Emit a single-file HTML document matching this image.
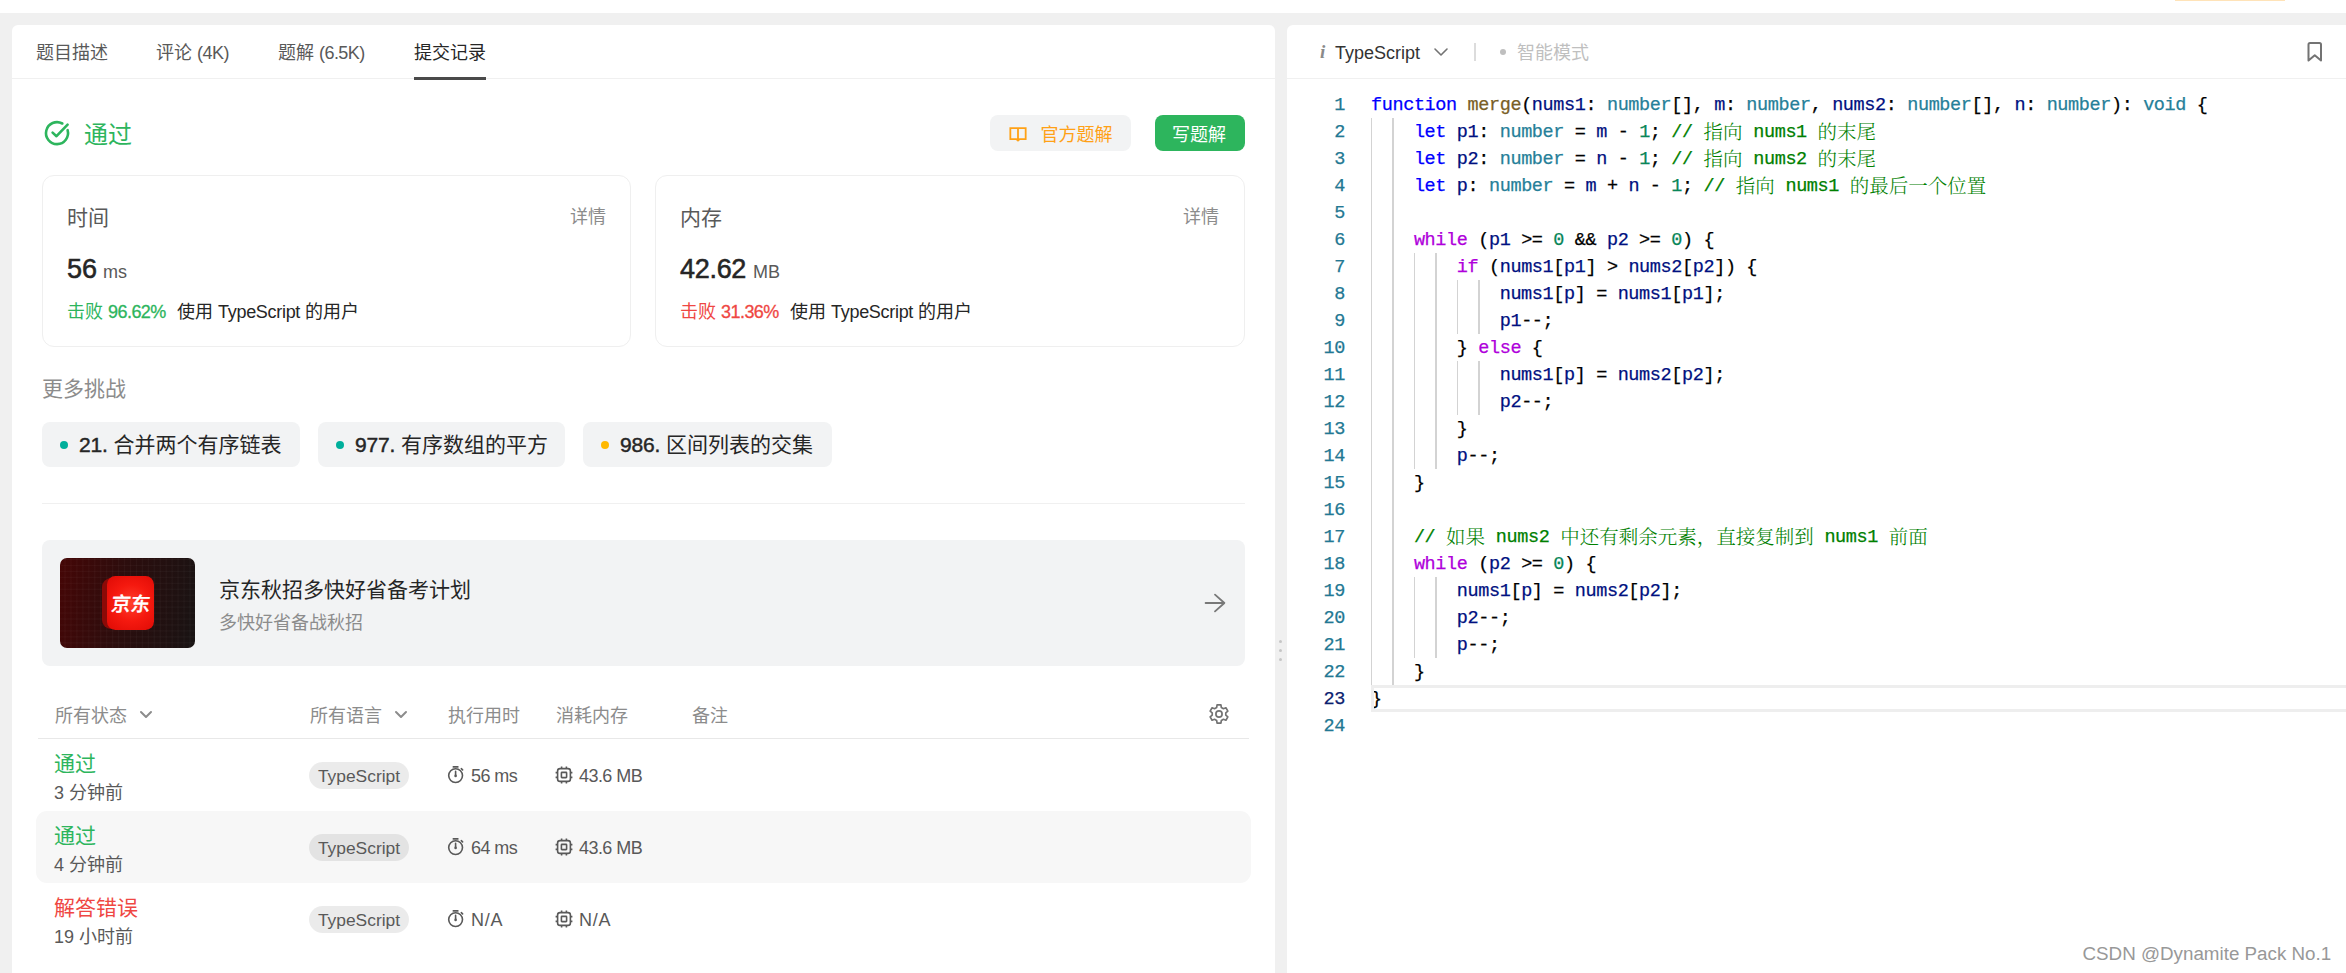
<!DOCTYPE html>
<html lang="zh-CN">
<head>
<meta charset="utf-8">
<title>提交记录</title>
<style>
*{box-sizing:border-box;margin:0;padding:0}
html,body{width:2346px;height:973px;overflow:hidden}
body{position:relative;background:#f0f0f0;font-family:"Liberation Sans","Noto Sans CJK SC",sans-serif;color:#262626}
.a{position:absolute;white-space:nowrap}
.t18{font-size:18px;line-height:30px;height:28px}
.t21{font-size:21px;line-height:34px;height:32px}
.g1{color:#262626}.g2{color:#595959}.g3{color:#8c8c8c}.g4{color:#bfbfbf}
.green{color:#2db55d}.red{color:#ef4743}.orange{color:#ffa116}
svg{position:absolute;overflow:visible}
.card{border:1px solid #efefef;border-radius:12px;background:#fff}
.chip{background:#f2f3f4;border-radius:8px;height:45px;top:422px}
.pill{background:rgba(0,0,0,.08);border-radius:14px;height:27px;width:100px;left:309px;font-size:17.4px;line-height:29px;text-align:center;color:#595959}
/* code */
.code{font-family:"Liberation Mono","Noto Serif CJK SC",monospace;font-size:18.5px;letter-spacing:-.38px;line-height:29px;height:27px;left:1371px;white-space:pre;color:#000;-webkit-text-stroke:.25px}
.ln{font-family:"Liberation Mono",monospace;font-size:18.5px;letter-spacing:-.38px;line-height:29px;-webkit-text-stroke:.25px;height:27px;left:1299px;width:46px;text-align:right;color:#237893}
.k{color:#0000ff}.c{color:#af00db}.ty{color:#267f99}.f{color:#795e26}.v{color:#001080}.n{color:#098658}.cm{color:#008000}
.z{font-size:19.5px;font-weight:300;letter-spacing:0;line-height:0;font-family:"Noto Serif CJK SC",serif;-webkit-text-stroke:0;position:relative;top:2px}
.l{letter-spacing:-.3px}.d{letter-spacing:-.55px}.sb{-webkit-text-stroke:.3px}
.gd{position:absolute;width:1.5px;background:#d9d9d9;margin-left:-.15px}
</style>
</head>
<body>
<!-- top strip -->
<div class="a" style="left:0;top:0;width:2346px;height:13px;background:#fff"></div>
<div class="a" style="left:2175px;top:0;width:110px;height:1px;background:#ffe3b8"></div>

<!-- LEFT PANEL -->
<div class="a" id="left" style="left:12px;top:25px;width:1263px;height:960px;background:#fff;border-radius:6px"></div>
<div class="a" style="left:12px;top:78px;width:1263px;height:1px;background:#f0f0f0"></div>

<!-- RIGHT PANEL -->
<div class="a" id="right" style="left:1287px;top:25px;width:1071px;height:960px;background:#fff;border-radius:6px"></div>
<div class="a" style="left:1287px;top:78px;width:1059px;height:1px;background:#f0f0f0"></div>

<!-- drag handle -->
<div class="a" style="left:1279px;top:640px;width:3px;height:3px;border-radius:2px;background:#c6c6c6"></div>
<div class="a" style="left:1279px;top:649px;width:3px;height:3px;border-radius:2px;background:#c6c6c6"></div>
<div class="a" style="left:1279px;top:658px;width:3px;height:3px;border-radius:2px;background:#c6c6c6"></div>
<!-- tabs -->
<div class="a t18 g2" style="left:36px;top:38px">题目描述</div>
<div class="a t18 g2" style="left:156px;top:38px">评论 <span class="d">(4K)</span></div>
<div class="a t18 g2" style="left:278px;top:38px">题解 <span class="d">(6.5K)</span></div>
<div class="a t18 g1" style="left:414px;top:38px">提交记录</div>
<div class="a" style="left:414px;top:77px;width:72px;height:3px;background:#4a4a4a"></div>

<!-- result heading -->
<svg style="left:43px;top:119px" width="28" height="28" viewBox="0 0 28 28" fill="none" stroke="#2db55d" stroke-width="2.6" stroke-linecap="round" stroke-linejoin="round"><path d="M24.6 11.2A11 11 0 1 1 19.3 4.5"/><path d="M9.6 13.6l3.9 3.6L24.6 5.6"/></svg>
<div class="a green" style="left:84px;top:117px;font-size:24px;line-height:36px">通过</div>

<!-- buttons -->
<div class="a" style="left:990px;top:115px;width:141px;height:36px;background:#f2f3f4;border-radius:8px"></div>
<svg style="left:1009px;top:125.5px" width="18" height="16.1" viewBox="0 0 19 17" fill="none" stroke="#ffa116" stroke-width="1.9"><path d="M9.5 2.2H1.4v11.6h6.3l1.8 1.6 1.8-1.6h6.3V2.2H9.5zM9.5 2.2v12.4"/></svg>
<div class="a t18 orange" style="left:1040.5px;top:119.5px">官方题解</div>
<div class="a" style="left:1155px;top:115px;width:90px;height:36px;background:#2db55d;border-radius:8px"></div>
<div class="a t18" style="left:1172px;top:119.5px;color:#fff">写题解</div>

<!-- cards -->
<div class="a card" style="left:42px;top:175px;width:589px;height:172px"></div>
<div class="a card" style="left:655px;top:175px;width:590px;height:172px"></div>
<div class="a t21 g2" style="left:67px;top:201px">时间</div>
<div class="a t18 g3" style="left:570px;top:201.7px">详情</div>
<div class="a g1" style="left:67px;top:248px;font-size:27px;line-height:42px;-webkit-text-stroke:.55px">56</div>
<div class="a t18 g2" style="left:103px;top:257px">ms</div>
<div class="a t18 green" style="left:67px;top:297px">击败 <span class="d sb">96.62%</span></div>
<div class="a t18 g1" style="left:177px;top:297px">使用 <span class="l">TypeScript</span> 的用户</div>

<div class="a t21 g2" style="left:680px;top:201px">内存</div>
<div class="a t18 g3" style="left:1183px;top:201.7px">详情</div>
<div class="a g1" style="left:680px;top:248px;font-size:27px;line-height:42px;-webkit-text-stroke:.55px;letter-spacing:-.3px">42.62</div>
<div class="a t18 g2" style="left:753px;top:257px">MB</div>
<div class="a t18 red" style="left:680px;top:297px">击败 <span class="d sb">31.36%</span></div>
<div class="a t18 g1" style="left:790px;top:297px">使用 <span class="l">TypeScript</span> 的用户</div>

<!-- more challenges -->
<div class="a t21 g3" style="left:42px;top:372px">更多挑战</div>
<div class="a chip" style="left:42px;width:258px"></div>
<div class="a chip" style="left:318px;width:247px"></div>
<div class="a chip" style="left:583px;width:249px"></div>
<div class="a" style="left:60px;top:441px;width:8px;height:8px;border-radius:4px;background:#00af9b"></div>
<div class="a" style="left:336px;top:441px;width:8px;height:8px;border-radius:4px;background:#00af9b"></div>
<div class="a" style="left:601px;top:441px;width:8px;height:8px;border-radius:4px;background:#ffb800"></div>
<div class="a t21 g1" style="left:79px;top:428.4px"><span style="-webkit-text-stroke:.45px;letter-spacing:-.2px">21.</span> 合并两个有序链表</div>
<div class="a t21 g1" style="left:355px;top:428.4px"><span style="-webkit-text-stroke:.45px;letter-spacing:-.2px">977.</span> 有序数组的平方</div>
<div class="a t21 g1" style="left:620px;top:428.4px"><span style="-webkit-text-stroke:.45px;letter-spacing:-.2px">986.</span> 区间列表的交集</div>
<div class="a" style="left:42px;top:503px;width:1203px;height:1px;background:#f0f0f0"></div>
<!-- ad card -->
<div class="a" style="left:42px;top:540px;width:1203px;height:126px;background:#f2f3f4;border-radius:8px"></div>
<div class="a" style="left:60px;top:558px;width:135px;height:90px;border-radius:7px;overflow:hidden;background:linear-gradient(100deg,#450606 0%,#2c0d0d 45%,#181313 100%)">
  <div class="a" style="left:0;top:0;width:135px;height:90px;background-image:linear-gradient(rgba(255,255,255,.032) 1px,transparent 1px),linear-gradient(90deg,rgba(255,255,255,.032) 1px,transparent 1px);background-size:5.96px 5.96px;background-position:4.5px 1px"></div>
  <div class="a" style="left:41.8px;top:19.6px;width:46px;height:51px;border-radius:9px;background:#8c0a07"></div>
  <div class="a" style="left:46.9px;top:17.8px;width:47px;height:54.2px;border-radius:8.5px;background:radial-gradient(circle at 52% 50%,#ff3e2c 0%,#f5190f 50%,#de0a05 100%)"></div>
  <div class="a" style="left:51px;top:32px;width:40px;height:26px;line-height:26px;font-size:19.5px;font-weight:500;-webkit-text-stroke:.35px;color:#fff;text-align:center;transform:skewX(-7deg);font-family:'Noto Sans CJK SC',sans-serif">京东</div>
</div>
<div class="a t21 g1" style="left:219px;top:573px">京东秋招多快好省备考计划</div>
<div class="a t18 g3" style="left:219px;top:607.6px">多快好省备战秋招</div>
<svg style="left:1203px;top:593px" width="24" height="20" viewBox="0 0 24 20" fill="none" stroke="#787878" stroke-width="1.8" stroke-linecap="round" stroke-linejoin="round"><path d="M2.6 10h18.6M12 1.6l9.4 8.4-9.4 8.4"/></svg>

<!-- table header -->
<div class="a t18 g3" style="left:55px;top:700.8px">所有状态</div>
<svg style="left:139px;top:710px" width="14" height="10" viewBox="0 0 14 10" fill="none" stroke="#8c8c8c" stroke-width="2" stroke-linecap="round" stroke-linejoin="round"><path d="M2 2l5 5 5-5"/></svg>
<div class="a t18 g3" style="left:310px;top:700.8px">所有语言</div>
<svg style="left:394px;top:710px" width="14" height="10" viewBox="0 0 14 10" fill="none" stroke="#8c8c8c" stroke-width="2" stroke-linecap="round" stroke-linejoin="round"><path d="M2 2l5 5 5-5"/></svg>
<div class="a t18 g3" style="left:448px;top:700.8px">执行用时</div>
<div class="a t18 g3" style="left:556px;top:700.8px">消耗内存</div>
<div class="a t18 g3" style="left:692px;top:700.8px">备注</div>
<svg style="left:1208px;top:703px" width="22" height="22" viewBox="0 0 22 22" fill="none" stroke="#737373" stroke-width="1.7" stroke-linejoin="round"><circle cx="11" cy="11" r="3.1"/><path d="M13.36 4.52L12.93 1.90L9.07 1.90L8.64 4.52L6.56 5.71L4.09 4.78L2.16 8.13L4.20 9.80L4.20 12.20L2.16 13.87L4.09 17.22L6.56 16.29L8.64 17.48L9.07 20.10L12.93 20.10L13.36 17.48L15.44 16.29L17.91 17.22L19.84 13.87L17.80 12.20L17.80 9.80L19.84 8.13L17.91 4.78L15.44 5.71z"/></svg>
<div class="a" style="left:38px;top:738px;width:1211px;height:1px;background:#e8e8e8"></div>

<!-- rows -->
<div class="a" style="left:36px;top:811px;width:1215px;height:72px;background:#f7f7f7;border-radius:11px"></div>
<div class="a t21 green" style="left:54px;top:747px">通过</div>
<div class="a t18 g2" style="left:54px;top:777.6px">3 分钟前</div>
<div class="a pill" style="top:762px">TypeScript</div>
<svg style="left:447px;top:765px" width="18" height="19" viewBox="0 0 18 19" fill="none" stroke="#595959" stroke-width="1.6" stroke-linecap="round"><circle cx="8.6" cy="10.6" r="6.9"/><path d="M6.3 1.9h4.6M8.6 10.6V6.4M14.3 3.7l1.3 1.2"/><circle cx="8.6" cy="10.9" r="1.3" fill="#595959" stroke="none"/></svg>
<div class="a t18 g2" style="left:471px;top:761px"><span class="d">56 ms</span></div>
<svg style="left:555px;top:766px" width="18" height="18" viewBox="0 0 18 18" fill="none" stroke="#595959" stroke-width="1.6"><rect x="2.6" y="2.6" width="12.8" height="12.8" rx="2.4"/><rect x="6.4" y="6.4" width="5.2" height="5.2" rx=".6"/><path d="M6.6 .6v2M11.4 .6v2M6.6 15.4v2M11.4 15.4v2M.6 6.6h2M.6 11.4h2M15.4 6.6h2M15.4 11.4h2"/></svg>
<div class="a t18 g2" style="left:579px;top:761px"><span class="d">43.6 MB</span></div>
<div class="a t21 green" style="left:54px;top:819px">通过</div>
<div class="a t18 g2" style="left:54px;top:849.6px">4 分钟前</div>
<div class="a pill" style="top:834px">TypeScript</div>
<svg style="left:447px;top:837px" width="18" height="19" viewBox="0 0 18 19" fill="none" stroke="#595959" stroke-width="1.6" stroke-linecap="round"><circle cx="8.6" cy="10.6" r="6.9"/><path d="M6.3 1.9h4.6M8.6 10.6V6.4M14.3 3.7l1.3 1.2"/><circle cx="8.6" cy="10.9" r="1.3" fill="#595959" stroke="none"/></svg>
<div class="a t18 g2" style="left:471px;top:833px"><span class="d">64 ms</span></div>
<svg style="left:555px;top:838px" width="18" height="18" viewBox="0 0 18 18" fill="none" stroke="#595959" stroke-width="1.6"><rect x="2.6" y="2.6" width="12.8" height="12.8" rx="2.4"/><rect x="6.4" y="6.4" width="5.2" height="5.2" rx=".6"/><path d="M6.6 .6v2M11.4 .6v2M6.6 15.4v2M11.4 15.4v2M.6 6.6h2M.6 11.4h2M15.4 6.6h2M15.4 11.4h2"/></svg>
<div class="a t18 g2" style="left:579px;top:833px"><span class="d">43.6 MB</span></div>
<div class="a t21 red" style="left:54px;top:891px">解答错误</div>
<div class="a t18 g2" style="left:54px;top:921.6px">19 小时前</div>
<div class="a pill" style="top:906px">TypeScript</div>
<svg style="left:447px;top:909px" width="18" height="19" viewBox="0 0 18 19" fill="none" stroke="#595959" stroke-width="1.6" stroke-linecap="round"><circle cx="8.6" cy="10.6" r="6.9"/><path d="M6.3 1.9h4.6M8.6 10.6V6.4M14.3 3.7l1.3 1.2"/><circle cx="8.6" cy="10.9" r="1.3" fill="#595959" stroke="none"/></svg>
<div class="a t18 g2" style="left:471px;top:905px"><span style="letter-spacing:.7px">N/A</span></div>
<svg style="left:555px;top:910px" width="18" height="18" viewBox="0 0 18 18" fill="none" stroke="#595959" stroke-width="1.6"><rect x="2.6" y="2.6" width="12.8" height="12.8" rx="2.4"/><rect x="6.4" y="6.4" width="5.2" height="5.2" rx=".6"/><path d="M6.6 .6v2M11.4 .6v2M6.6 15.4v2M11.4 15.4v2M.6 6.6h2M.6 11.4h2M15.4 6.6h2M15.4 11.4h2"/></svg>
<div class="a t18 g2" style="left:579px;top:905px"><span style="letter-spacing:.7px">N/A</span></div>

<!-- editor header -->
<div class="a" style="left:1320px;top:37.5px;font-size:19px;line-height:28px;font-family:'Liberation Serif',serif;font-style:italic;font-weight:bold;color:#8a8a8a">i</div>
<div class="a t18" style="left:1335px;top:38px;color:#333">TypeScript</div>
<svg style="left:1433px;top:47px" width="16" height="10" viewBox="0 0 16 10" fill="none" stroke="#737373" stroke-width="1.6" stroke-linecap="round" stroke-linejoin="round"><path d="M2 2l6 6 6-6"/></svg>
<div class="a" style="left:1474px;top:43px;width:1.5px;height:18px;background:#dcdcdc"></div>
<div class="a" style="left:1500px;top:49px;width:6px;height:6px;border-radius:3px;background:#bfbfbf"></div>
<div class="a t18 g4" style="left:1517px;top:38px">智能模式</div>
<svg style="left:2306px;top:41px" width="18" height="22" viewBox="0 0 18 22" fill="none" stroke="#737373" stroke-width="2" stroke-linejoin="round"><path d="M4 2h9.5a1.5 1.5 0 0 1 1.5 1.5v16l-6.25-5.2-6.25 5.2v-16a1.5 1.5 0 0 1 1.5-1.5z"/></svg>
<!-- code -->
<div class="a ln" style="top:91px;color:#237893">1</div>
<div class="a code" style="top:91px"><span class="k">function</span> <span class="f">merge</span>(<span class="v">nums1</span>: <span class="ty">number</span>[], <span class="v">m</span>: <span class="ty">number</span>, <span class="v">nums2</span>: <span class="ty">number</span>[], <span class="v">n</span>: <span class="ty">number</span>): <span class="ty">void</span> {</div>
<div class="a ln" style="top:118px;color:#237893">2</div>
<div class="a code" style="top:118px">    <span class="k">let</span> <span class="v">p1</span>: <span class="ty">number</span> = <span class="v">m</span> - <span class="n">1</span>; <span class="cm">// <span class="z">指向</span> nums1 <span class="z">的末尾</span></span></div>
<div class="a ln" style="top:145px;color:#237893">3</div>
<div class="a code" style="top:145px">    <span class="k">let</span> <span class="v">p2</span>: <span class="ty">number</span> = <span class="v">n</span> - <span class="n">1</span>; <span class="cm">// <span class="z">指向</span> nums2 <span class="z">的末尾</span></span></div>
<div class="a ln" style="top:172px;color:#237893">4</div>
<div class="a code" style="top:172px">    <span class="k">let</span> <span class="v">p</span>: <span class="ty">number</span> = <span class="v">m</span> + <span class="v">n</span> - <span class="n">1</span>; <span class="cm">// <span class="z">指向</span> nums1 <span class="z">的最后一个位置</span></span></div>
<div class="a ln" style="top:199px;color:#237893">5</div>
<div class="a ln" style="top:226px;color:#237893">6</div>
<div class="a code" style="top:226px">    <span class="c">while</span> (<span class="v">p1</span> &gt;= <span class="n">0</span> &amp;&amp; <span class="v">p2</span> &gt;= <span class="n">0</span>) {</div>
<div class="a ln" style="top:253px;color:#237893">7</div>
<div class="a code" style="top:253px">        <span class="c">if</span> (<span class="v">nums1</span>[<span class="v">p1</span>] &gt; <span class="v">nums2</span>[<span class="v">p2</span>]) {</div>
<div class="a ln" style="top:280px;color:#237893">8</div>
<div class="a code" style="top:280px">            <span class="v">nums1</span>[<span class="v">p</span>] = <span class="v">nums1</span>[<span class="v">p1</span>];</div>
<div class="a ln" style="top:307px;color:#237893">9</div>
<div class="a code" style="top:307px">            <span class="v">p1</span>--;</div>
<div class="a ln" style="top:334px;color:#237893">10</div>
<div class="a code" style="top:334px">        } <span class="c">else</span> {</div>
<div class="a ln" style="top:361px;color:#237893">11</div>
<div class="a code" style="top:361px">            <span class="v">nums1</span>[<span class="v">p</span>] = <span class="v">nums2</span>[<span class="v">p2</span>];</div>
<div class="a ln" style="top:388px;color:#237893">12</div>
<div class="a code" style="top:388px">            <span class="v">p2</span>--;</div>
<div class="a ln" style="top:415px;color:#237893">13</div>
<div class="a code" style="top:415px">        }</div>
<div class="a ln" style="top:442px;color:#237893">14</div>
<div class="a code" style="top:442px">        <span class="v">p</span>--;</div>
<div class="a ln" style="top:469px;color:#237893">15</div>
<div class="a code" style="top:469px">    }</div>
<div class="a ln" style="top:496px;color:#237893">16</div>
<div class="a ln" style="top:523px;color:#237893">17</div>
<div class="a code" style="top:523px">    <span class="cm">// <span class="z">如果</span> nums2 <span class="z">中还有剩余元素，直接复制到</span> nums1 <span class="z">前面</span></span></div>
<div class="a ln" style="top:550px;color:#237893">18</div>
<div class="a code" style="top:550px">    <span class="c">while</span> (<span class="v">p2</span> &gt;= <span class="n">0</span>) {</div>
<div class="a ln" style="top:577px;color:#237893">19</div>
<div class="a code" style="top:577px">        <span class="v">nums1</span>[<span class="v">p</span>] = <span class="v">nums2</span>[<span class="v">p2</span>];</div>
<div class="a ln" style="top:604px;color:#237893">20</div>
<div class="a code" style="top:604px">        <span class="v">p2</span>--;</div>
<div class="a ln" style="top:631px;color:#237893">21</div>
<div class="a code" style="top:631px">        <span class="v">p</span>--;</div>
<div class="a ln" style="top:658px;color:#237893">22</div>
<div class="a code" style="top:658px">    }</div>
<div class="a ln" style="top:685px;color:#0b216f">23</div>
<div class="a code" style="top:685px">}</div>
<div class="a ln" style="top:712px;color:#237893">24</div>
<div class="gd" style="left:1371.0px;top:118px;height:567px;background:#d3d3d3"></div>
<div class="gd" style="left:1392.4px;top:118px;height:567px;background:#d3d3d3"></div>
<div class="gd" style="left:1413.9px;top:253px;height:216px;background:#d3d3d3"></div>
<div class="gd" style="left:1435.3px;top:253px;height:216px;background:#d3d3d3"></div>
<div class="gd" style="left:1456.8px;top:280px;height:54px;background:#d3d3d3"></div>
<div class="gd" style="left:1478.2px;top:280px;height:54px;background:#d3d3d3"></div>
<div class="gd" style="left:1456.8px;top:361px;height:54px;background:#d3d3d3"></div>
<div class="gd" style="left:1478.2px;top:361px;height:54px;background:#d3d3d3"></div>
<div class="gd" style="left:1413.9px;top:577px;height:81px;background:#d3d3d3"></div>
<div class="gd" style="left:1435.3px;top:577px;height:81px;background:#d3d3d3"></div>
<div class="a" style="left:1371px;top:685px;width:990px;height:27px;border:3px solid #eee"></div>
<div class="a" style="left:2082.5px;top:942.5px;font-size:18.8px;line-height:22px;color:#989898;font-family:'Liberation Sans',sans-serif">CSDN @Dynamite Pack No.1</div>
</body>
</html>
